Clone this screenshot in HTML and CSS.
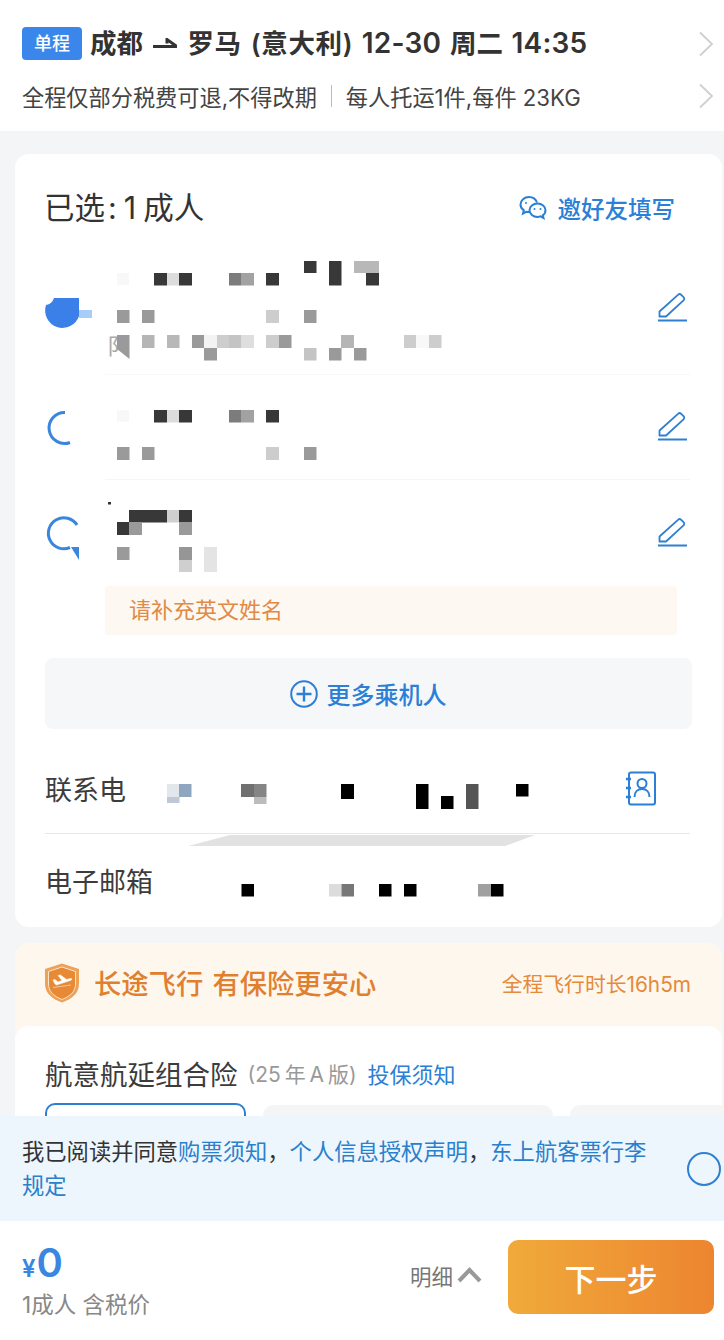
FILE: index.html
```html
<!DOCTYPE html>
<html lang="zh-CN">
<head>
  <meta charset="UTF-8" />
  <meta name="viewport" content="width=device-width, initial-scale=1" />
  <title>填写乘机人</title>
  <link rel="stylesheet" href="styles.css">
</head>
<body>
  <div class="page">
    <header class="trip">
      <div class="trip-line">
        <span class="badge">单程</span>
        <h1>成都 <svg class="arrow" width="24" height="10" viewBox="0 0 24 10"><path d="M0 8.500h24L14 1.500v4" fill="none" stroke="#333" stroke-width="3"/></svg> <span class="place">罗马 (意大利)</span> <span class="num">12-30</span> 周二 <span class="num">14:35</span></h1>
        <svg class="chevron" width="16" height="26" viewBox="0 0 16 26"><path d="M2 1.500 14 13 2 24.500" fill="none" stroke="#cfcfcf" stroke-width="1.800"/></svg>
      </div>
      <div class="trip-line rules">
        <span>全程仅部分税费可退,不得改期</span>
        <i class="sep"></i>
        <span>每人托运1件,每件 23KG</span>
        <svg class="chevron" width="16" height="26" viewBox="0 0 16 26"><path d="M2 1.500 14 13 2 24.500" fill="none" stroke="#cfcfcf" stroke-width="1.800"/></svg>
      </div>
    </header>

    <section class="card passengers">
      <div class="card-head">
        <h2>已选<span class="count">:1</span>成人</h2>
        <a class="invite">
          <svg width="28" height="26" viewBox="0 0 28 26" fill="none" stroke="#2b7fd6" stroke-width="2">
            <path d="M18 7.500C16.800 4 13.600 2 10 2 5.400 2 1.500 5.300 1.500 9.500c0 2.400 1.300 4.500 3.300 5.900L4 18.500l3.600-1.800c.8.2 1.600.3 2.400.3"/>
            <path d="M18.500 8.500c4.400 0 8 3 8 6.800 0 2-1 3.800-2.700 5l.7 2.700-3-1.600c-1 .3-2 .5-3 .5-4.400 0-8-3-8-6.600s3.600-6.800 8-6.800Z"/>
            <circle cx="15.500" cy="14" r="1" fill="#2b7fd6" stroke="none"/>
            <circle cx="21.500" cy="14" r="1" fill="#2b7fd6" stroke="none"/>
            <circle cx="7" cy="8" r="1" fill="#2b7fd6" stroke="none"/>
          </svg>
          邀好友填写
        </a>
      </div>

      <div class="person person-long">
        <svg class="pencil" width="30" height="30" viewBox="0 0 30 30"><use href="#pencil"/></svg>
      </div>
      <div class="person person-short">
        <svg class="pencil" width="30" height="30" viewBox="0 0 30 30"><use href="#pencil"/></svg>
      </div>
      <div class="person person-warn">
        <svg class="pencil" width="30" height="30" viewBox="0 0 30 30"><use href="#pencil"/></svg>
        <p class="warn">请补充英文姓名</p>
      </div>

      <button class="more">
        <svg width="28" height="28" viewBox="0 0 28 28" fill="none" stroke="#2b7fd6" stroke-width="2"><circle cx="14" cy="14" r="12.800"/><path d="M14 6.500v15M6.500 14h15" stroke-width="2.400"/></svg>
        更多乘机人
      </button>

      <div class="field field-phone">
        <span class="label">联系电话</span>
        <svg width="32" height="36" viewBox="0 0 32 36" fill="none" stroke="#2b7fd6" stroke-width="2">
          <rect x="4" y="1.500" width="26" height="32" rx="2"/>
          <path d="M1 8h5M1 17h5M1 26h5" stroke-width="2.400"/>
          <circle cx="17" cy="12.500" r="4.500"/>
          <path d="M9.500 26c0-5 3-8 7.500-8s7.500 3 7.500 8"/>
        </svg>
      </div>
      <div class="field field-mail">
        <span class="label">电子邮箱</span>
      </div>
    </section>

    <section class="insure">
      <div class="insure-head">
        <div class="insure-title">
          <svg width="36" height="40" viewBox="0 0 36 40">
            <path d="M18 .500 35 6v15c0 9-7 15-17 18.500C8 36 1 30 1 21V6Z" fill="#eda25a"/>
            <path d="M18 4 31.500 8.500V21c0 7.500-5.500 12.500-13.500 15.500C10 33.500 4.500 28.500 4.500 21V8.500Z" fill="#e88a35" stroke="#fbe3c8" stroke-width="1"/>
            <path d="M9 24.500 27 22M11 21l-2-4 2-.5 3 2.500 4-1.500-4-5 2.500-.5 6 4.500 4-1c1.500-.4 2 1 .5 1.800L12.500 22Z" fill="#fff" stroke="#fff" stroke-width=".5"/>
          </svg>
          <span>长途飞行 有保险更安心</span>
        </div>
        <span class="duration">全程飞行时长16h5m</span>
      </div>
      <div class="insure-body">
        <div class="insure-name">
          <strong>航意航延组合险</strong>
          <span class="edition">(25 年 A 版)</span>
          <a>投保须知</a>
        </div>
        <div class="plans">
          <div class="plan plan-on"></div>
          <div class="plan plan-wide"></div>
          <div class="plan plan-rest"></div>
        </div>
      </div>
    </section>

    <!-- mosaic over the personal details -->
    <svg class="mosaic" width="724" height="1340" viewBox="0 0 724 1340">
      <defs>
        <g id="pencil" fill="none" stroke="#2f7fd0">
          <path d="M1.500 23.500v-5L20 1.800c1-1 2.200-1 3.200 0l2.300 2.300c1 1 1 2.200 0 3.200L8 23.500Z" stroke-width="1.800" stroke-linejoin="round"/>
          <path d="M0 27.500h29" stroke-width="2"/>
        </g>
      </defs>

      <!-- row 1 -->
      <path d="M46 305Q52 304 54 298H79V316A17 17 0 0 1 46 305Z" fill="#3a80e8"/>
      <rect x="79" y="310" width="13" height="8" fill="#a8cdf6"/>
      <rect x="117" y="273" width="12" height="12" fill="#f8f8f8"/>
      <rect x="154" y="273" width="13" height="12.500" fill="#383838"/>
      <rect x="167" y="273" width="12" height="12.500" fill="#dcdcdc"/>
      <rect x="179" y="273" width="13" height="12.500" fill="#383838"/>
      <rect x="229" y="273" width="12" height="12.500" fill="#7c7c7c"/>
      <rect x="241" y="273" width="13" height="12.500" fill="#a2a2a2"/>
      <rect x="266" y="273" width="13" height="12.500" fill="#383838"/>
      <rect x="304" y="261" width="12.500" height="12" fill="#383838"/>
      <rect x="329" y="261" width="12.500" height="24.500" fill="#383838"/>
      <rect x="354" y="261" width="25" height="12" fill="#b8b8b8"/>
      <rect x="366" y="273" width="13" height="12.500" fill="#383838"/>
      <rect x="117" y="310" width="12.500" height="13" fill="#9a9a9a"/>
      <rect x="142" y="310" width="12.500" height="13" fill="#9a9a9a"/>
      <rect x="266" y="310" width="13" height="13" fill="#cdcdcd"/>
      <rect x="304" y="310" width="12.500" height="13" fill="#9a9a9a"/>
      <text x="107" y="354" class="scrap">阝</text>
      <path d="M117 335h12.500v24l-12.500-10Z" fill="#9a9a9a"/>
      <rect x="142" y="335" width="12.500" height="13" fill="#b5b5b5"/>
      <rect x="167" y="335" width="12.500" height="13" fill="#b8b8b8"/>
      <rect x="192" y="335" width="12.500" height="13" fill="#9a9a9a"/>
      <rect x="204" y="335" width="13" height="13" fill="#f3f3f3"/>
      <rect x="217" y="335" width="12" height="13" fill="#cdcdcd"/>
      <rect x="229" y="335" width="12" height="13" fill="#c4c4c4"/>
      <rect x="241" y="335" width="13" height="13" fill="#dedede"/>
      <rect x="266" y="335" width="13" height="13" fill="#cdcdcd"/>
      <rect x="279" y="335" width="12.500" height="13" fill="#9a9a9a"/>
      <rect x="204" y="348" width="13" height="12.500" fill="#9a9a9a"/>
      <rect x="304" y="348" width="12.500" height="12.500" fill="#c4c4c4"/>
      <rect x="329" y="348" width="12.500" height="12.500" fill="#9a9a9a"/>
      <rect x="341" y="335" width="13" height="13" fill="#b5b5b5"/>
      <rect x="354" y="348" width="12.500" height="12.500" fill="#9a9a9a"/>
      <rect x="404" y="335" width="12.500" height="13" fill="#cdcdcd"/>
      <rect x="416" y="335" width="13" height="13" fill="#f8f8f8"/>
      <rect x="429" y="335" width="12.500" height="13" fill="#cdcdcd"/>

      <!-- row 2 -->
      <path d="M65 412.500a15.500 15.500 0 1 0 5 30" fill="none" stroke="#3a86dc" stroke-width="3"/>
      <rect x="117" y="410" width="12" height="12" fill="#f8f8f8"/>
      <rect x="154" y="410" width="13" height="12.500" fill="#383838"/>
      <rect x="167" y="410" width="12" height="12.500" fill="#dcdcdc"/>
      <rect x="179" y="410" width="13" height="12.500" fill="#383838"/>
      <rect x="229" y="410" width="12" height="12.500" fill="#7c7c7c"/>
      <rect x="241" y="410" width="13" height="12.500" fill="#a2a2a2"/>
      <rect x="266" y="410" width="13" height="12.500" fill="#383838"/>
      <rect x="117" y="447" width="12.500" height="13" fill="#9a9a9a"/>
      <rect x="142" y="447" width="12.500" height="13" fill="#9a9a9a"/>
      <rect x="266" y="447" width="13" height="13" fill="#cdcdcd"/>
      <rect x="304" y="447" width="12.500" height="13" fill="#9a9a9a"/>

      <!-- row 3 -->
      <path d="M77 525a15.500 15.500 0 1 0-7 22.500" fill="none" stroke="#3a86dc" stroke-width="3"/>
      <path d="M71 547h8v13Z" fill="#3a86dc"/>
      <rect x="108" y="502" width="3" height="2.500" fill="#333"/>
      <rect x="129" y="510" width="38" height="12.500" fill="#383838"/>
      <rect x="167" y="510" width="12" height="12.500" fill="#d0d0d0"/>
      <rect x="179" y="510" width="13" height="12.500" fill="#383838"/>
      <rect x="117" y="522" width="12.500" height="13" fill="#383838"/>
      <rect x="129" y="522" width="13" height="13" fill="#9a9a9a"/>
      <rect x="179" y="522" width="13" height="13" fill="#9a9a9a"/>
      <rect x="117" y="547" width="12.500" height="13" fill="#9a9a9a"/>
      <rect x="179" y="547" width="13" height="13" fill="#969696"/>
      <rect x="179" y="560" width="13" height="12" fill="#cfcfcf"/>
      <rect x="204" y="547" width="13" height="25" fill="#e4e4e4"/>

      <!-- phone -->
      <rect x="126" y="770" width="41" height="44" fill="#fff"/>
      <rect x="167" y="784" width="12.500" height="13" fill="#e2e7eb"/>
      <rect x="179" y="784" width="12.500" height="13" fill="#8fa6c0"/>
      <rect x="167" y="797" width="12.500" height="6" fill="#c0c8d8"/>
      <rect x="241" y="784" width="13" height="13" fill="#707070"/>
      <rect x="254" y="784" width="12.500" height="13" fill="#858585"/>
      <rect x="254" y="797" width="12.500" height="7" fill="#bcbcbc"/>
      <rect x="341" y="784" width="13" height="15" fill="#000"/>
      <rect x="416" y="784" width="12.500" height="25" fill="#000"/>
      <rect x="441" y="796" width="12.500" height="13" fill="#000"/>
      <rect x="466" y="784" width="12.500" height="25" fill="#555"/>
      <rect x="516" y="784" width="12.500" height="12.500" fill="#000"/>
      <path d="M230 835h305l-30 11H188Z" fill="#e2e2e2"/>

      <!-- email -->
      <rect x="241.500" y="884" width="12.500" height="12.500" fill="#000"/>
      <rect x="329" y="884" width="12.500" height="12.500" fill="#dcdcdc"/>
      <rect x="341.500" y="884" width="12.500" height="12.500" fill="#777"/>
      <rect x="379" y="884" width="12.500" height="12.500" fill="#000"/>
      <rect x="404" y="884" width="12.500" height="12.500" fill="#000"/>
      <rect x="478" y="884" width="13" height="12.500" fill="#a0a0a0"/>
      <rect x="491" y="884" width="12.500" height="12.500" fill="#000"/>
    </svg>

    <footer class="foot">
      <div class="agree">
        <p>我已阅读并同意<a>购票须知</a>，<a>个人信息授权声明</a>，<a>东上航客票行李规定</a></p>
        <i class="check"></i>
      </div>
      <div class="pay">
        <div class="price">
          <div class="amount"><small>¥</small>0</div>
          <div class="who">1成人 含税价</div>
        </div>
        <div class="detail">
          明细
          <svg width="25" height="16" viewBox="0 0 25 16"><path d="M2 14 12.500 3 23 14" fill="none" stroke="#999" stroke-width="4"/></svg>
        </div>
        <button class="next">下一步</button>
      </div>
    </footer>
  </div>
</body>
</html>
```

FILE: styles.css
```css
* { box-sizing: border-box; margin: 0; padding: 0; }
body { font-family: Inter, "Noto Sans CJK SC", sans-serif; color: #333; background: #f3f5f7; }
a { color: #2b7fd6; }
button { font-family: inherit; border: 0; }
.page { position: relative; width: 724px; height: 1340px; overflow: hidden; background: #f3f5f7; }

.trip { height: 131px; background: #fff; padding: 27px 10px 0 22px; }
.trip-line { display: flex; align-items: center; height: 33px; }
.badge { width: 60px; height: 33px; line-height: 33px; margin-right: 8px; background: #3a86ea; color: #fff; font-size: 18px; font-weight: 500; text-align: center; border-radius: 4px; }
.trip h1 { font-size: 26.500px; line-height: 33px; font-weight: 600; word-spacing: 2px; white-space: nowrap; color: #333; }
.place { letter-spacing: .6px; }
.num { font-size: 28px; letter-spacing: .2px; }
.arrow { margin: 0 2px 5px 1px; }
.chevron { margin-left: auto; flex: none; }
.rules { margin-top: 19px; font-size: 22.200px; color: #444; white-space: nowrap; }
.sep { width: 1px; height: 22px; margin: 0 14px; background: #bbb; }

.card { margin: 23px 2px 0 15px; background: #fff; border-radius: 14px; }
.passengers { height: 773px; padding: 0 30px; }
.card-head { display: flex; align-items: center; justify-content: space-between; height: 108px; padding: 0 17px 4px 0; }
.card-head h2 { font-size: 30.500px; font-weight: 400; color: #333; margin-left: -1px; }
.count { letter-spacing: 7px; margin-left: 3px; }
.invite { display: flex; align-items: center; gap: 11px; margin: 3px 0 0 -2px; font-size: 23.500px; font-weight: 500; }

.person { position: relative; margin-left: 60px; margin-right: 2px; }
.person-long { height: 130px; margin-top: -17px; border-bottom: 1px solid #f8f8f8; }
.person-short { height: 105px; border-bottom: 1px solid #f6f6f6; }
.person-warn { height: 155px; }
.pencil { position: absolute; right: 2px; }
.person-long .pencil { top: 48px; }
.person-short .pencil { top: 37px; }
.person-warn .pencil { top: 38px; }
.warn { position: absolute; top: 106px; left: 0; right: 13px; height: 49px; line-height: 49px; padding-left: 24px; background: #fdf8f2; color: #e08a45; font-size: 22px; border-radius: 4px; }

.more { display: flex; align-items: center; justify-content: center; gap: 9px; width: 647px; height: 71px; margin-top: 23px; padding-right: 1px; background: #f6f7f9; color: #2b7fd6; font-size: 24px; font-weight: 500; border-radius: 8px; }

.field { display: flex; align-items: center; justify-content: space-between; width: 645px; height: 93px; padding-right: 33px; }
.field-phone { height: 105px; padding-top: 16px; border-bottom: 1px solid #e8e8e8; }
.field-phone .label { margin-top: 4px; }
.field-mail { padding-bottom: 3px; }
.field-mail .label { margin-top: 7px; }
.label { font-size: 27px; line-height: 36px; margin-left: 0; color: #3c3c3c; }

.insure { margin: 16px 2px 0 15px; background: #fef7ed; border-radius: 14px 14px 0 0; }
.insure-head { display: flex; align-items: center; justify-content: space-between; height: 83px; padding: 0 31px 3px 29px; }
.insure-title { display: flex; align-items: center; gap: 14px; font-size: 27.300px; font-weight: 500; word-spacing: 2px; color: #e0802f; }
.insure-title span { margin-top: -2px; }
.duration { font-size: 20.800px; color: #e58a3a; }
.insure-body { height: 320px; padding: 26px 0 0 30px; background: #fff; border-radius: 14px 14px 0 0; }
.insure-name { display: flex; align-items: center; height: 42px; }
.insure-name strong { font-size: 27.500px; font-weight: 400; color: #3c3c3c; }
.edition { margin-left: 10px; font-size: 21px; word-spacing: -2px; color: #999; }
.insure-name a { margin-left: 11px; font-size: 22px; }
.plans { display: flex; gap: 17px; margin-top: 9px; }
.plan { flex: none; height: 110px; background: #f5f5f5; border-radius: 10px; }
.plan-on { width: 201px; background: #fff; border: 2px solid #2f7fd0; }
.plan-wide { width: 290px; margin-top: 2px; }
.plan-rest { width: 160px; margin-top: 2px; }

.mosaic { position: absolute; top: 0; left: 0; pointer-events: none; }
.scrap { font-size: 22px; fill: #aaa; }

.foot { position: absolute; left: 0; right: 0; bottom: 0; height: 224px; background: #fff; }
.agree { display: flex; align-items: center; justify-content: space-between; height: 105px; padding: 0 3px 0 22px; background: #eef6fd; }
.agree p { width: 640px; font-size: 22.300px; line-height: 34px; color: #333; }
.agree a { color: #2b80cc; }
.check { width: 34px; height: 34px; border: 2px solid #2f7fd0; border-radius: 50%; }

.pay { display: flex; align-items: center; height: 119px; padding: 12px 10px 13px 22px; }
.price { flex: 1; }
.amount { height: 44px; font-size: 40px; line-height: 44px; font-weight: 600; color: #3a86e0; }
.amount small { font-size: 24px; font-weight: 600; margin-right: 1px; }
.who { margin-top: 5px; font-size: 22.500px; line-height: 30px; color: #888; }
.detail { display: flex; align-items: center; gap: 4px; margin-right: 26px; margin-bottom: 10px; font-size: 21.500px; color: #777; }
.next { width: 206px; height: 74px; margin-top: -6px; background: linear-gradient(90deg, #f0aa3a, #ed8530); color: #fff; font-size: 31px; font-weight: 500; border-radius: 10px; }
```
